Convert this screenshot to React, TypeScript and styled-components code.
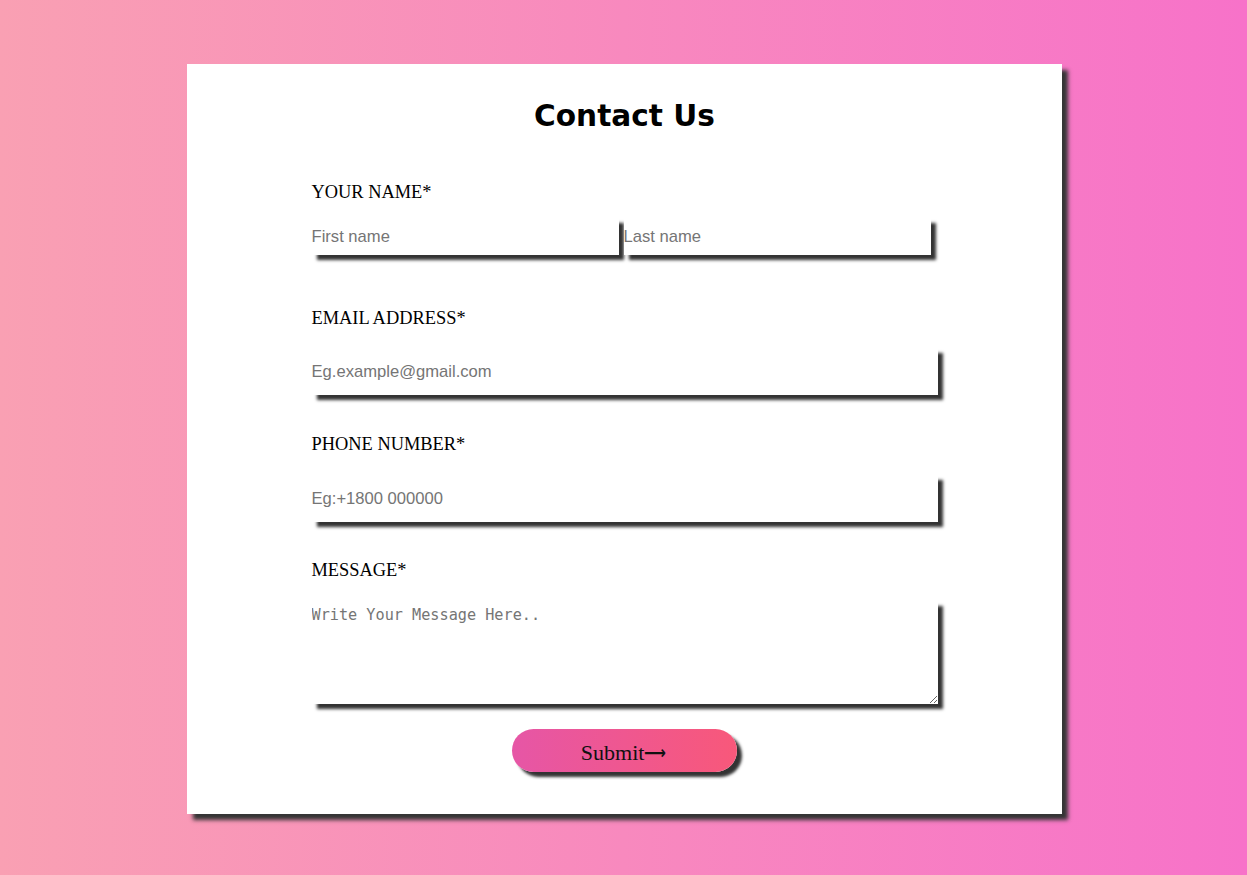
import React from "react";
import styled, { createGlobalStyle } from "styled-components";

const GlobalStyle = createGlobalStyle`
  html, body { margin: 0; padding: 0; }
  body {
    min-height: 875px;
    background: linear-gradient(to right, #f9a0b3, #f772c9);
    font-family: "Liberation Serif", serif;
  }
  * { box-sizing: border-box; }
`;

const Page = styled.div`
  display: flex;
  justify-content: center;
  padding: 64px 0 0 1px;
  min-height: 875px;
`;

const Card = styled.form`
  width: 875px;
  height: 750px;
  background: #ffffff;
  box-shadow: 6px 6px 4px #353535;
  padding: 34px 124px 42px 125px;
  display: flex;
  flex-direction: column;
`;

const Title = styled.h1`
  margin: 0 0 46px;
  font-family: "DejaVu Sans", Verdana, sans-serif;
  font-weight: bold;
  font-size: 29.6px;
  line-height: 36px;
  text-align: center;
  color: #000;
`;

const Field = styled.div<{ $after: number }>`
  display: flex;
  flex-direction: column;
  margin-bottom: ${(p) => p.$after}px;
`;

const Label = styled.label<{ $gap: number }>`
  font-family: "Liberation Serif", serif;
  font-size: 18.4px;
  line-height: 24px;
  color: #000;
  margin-bottom: ${(p) => p.$gap}px;
`;

const NameRow = styled.div`
  display: grid;
  grid-template-columns: 307px 307px;
  column-gap: 5px;
`;

const Input = styled.input<{ $h: number }>`
  height: ${(p) => p.$h}px;
  width: 100%;
  border: none;
  outline: none;
  padding: 0;
  background: #fff;
  font-family: "Liberation Sans", Arial, sans-serif;
  font-size: 16.6px;
  color: #222;
  box-shadow: 5px 5px 3px #333;
  &::placeholder { color: #757575; }
`;

const TextArea = styled.textarea`
  height: 103px;
  width: 100%;
  border: none;
  outline: none;
  padding: 5px 0 0;
  background: #fff;
  font-family: "DejaVu Sans Mono", monospace;
  font-size: 15.2px;
  color: #222;
  box-shadow: 5px 5px 3px #333;
  &::placeholder { color: #757575; }
`;

const ButtonRow = styled.div`
  display: flex;
  justify-content: center;
`;

const SubmitButton = styled.button`
  width: 225px;
  height: 43px;
  border: none;
  border-radius: 22px;
  background: linear-gradient(to right, #e656a6, #f8587a);
  box-shadow: 5px 5px 3px #333;
  font-family: "Liberation Serif", serif;
  font-size: 22px;
  color: #111;
  cursor: pointer;
  padding: 4px 0 0 2px;
  display: flex;
  align-items: center;
  justify-content: center;
`;

const Arrow = styled.span`
  font-family: "DejaVu Sans", sans-serif;
  font-weight: bold;
  font-size: 18px;
  line-height: 1;
  transform: scaleX(0.85);
  transform-origin: left center;
  margin-top: 1px;
`;

export default function App() {
  return (
    <>
      <GlobalStyle />
      <Page>
        <Card onSubmit={(e) => e.preventDefault()}>
          <Title>Contact Us</Title>
          <Field $after={51}>
            <Label $gap={14}>YOUR NAME*</Label>
            <NameRow>
              <Input $h={37} type="text" placeholder="First name" />
              <Input $h={37} type="text" placeholder="Last name" />
            </NameRow>
          </Field>
          <Field $after={37}>
            <Label $gap={18}>EMAIL ADDRESS*</Label>
            <Input $h={47} type="email" placeholder="Eg.example@gmail.com" />
          </Field>
          <Field $after={36}>
            <Label $gap={19}>PHONE NUMBER*</Label>
            <Input $h={47} type="tel" placeholder="Eg:+1800 000000" />
          </Field>
          <Field $after={25}>
            <Label $gap={19}>MESSAGE*</Label>
            <TextArea placeholder="Write Your Message Here.." />
          </Field>
          <ButtonRow>
            <SubmitButton type="submit">
              Submit<Arrow>⟶</Arrow>
            </SubmitButton>
          </ButtonRow>
        </Card>
      </Page>
    </>
  );
}
